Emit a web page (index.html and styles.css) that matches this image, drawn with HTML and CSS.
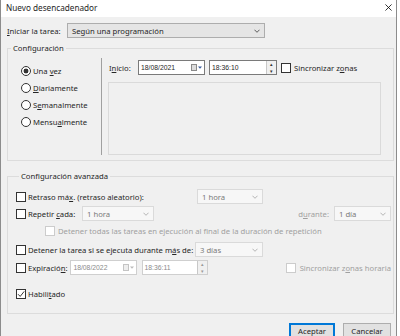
FILE: index.html
```html
<!DOCTYPE html>
<html lang="es">
<head>
    <meta charset="UTF-8">
    <title>Nuevo desencadenador</title>
    <link rel="stylesheet" href="styles.css">
</head>
<body>
<div class="window">
    <div class="titlebar">
        <span class="title">Nuevo desencadenador</span>
        <svg class="close" viewBox="0 0 8 8"><path d="M0.5 0.5L7.5 7.5M7.5 0.5L0.5 7.5" stroke="#000" stroke-width="0.9" fill="none"/></svg>
    </div>

    <div class="content">
        <div class="start-row">
            <span class="start-lbl"><u>I</u>niciar la tarea:</span>
            <div class="combo start-combo">
                <span>Según una programación</span>
                <svg class="chev" viewBox="0 0 7 4"><path d="M0.5 0.5L3.5 3.5L6.5 0.5" stroke="#444" fill="none"/></svg>
            </div>
        </div>

        <fieldset class="group group-config">
            <legend>Configuración</legend>
            <div class="config-body">
                <div class="radios">
                    <div class="radio-row"><span class="radio checked"></span><span>Una <u>v</u>ez</span></div>
                    <div class="radio-row"><span class="radio"></span><span><u>D</u>iariamente</span></div>
                    <div class="radio-row"><span class="radio"></span><span>S<u>e</u>manalmente</span></div>
                    <div class="radio-row"><span class="radio"></span><span>Mensu<u>a</u>lmente</span></div>
                </div>
                <div class="vsep"></div>
                <div class="schedule">
                    <div class="start-line">
                        <span class="inicio-lbl">I<u>n</u>icio:</span>
                        <div class="datebox">
                            <span>18/08/2021</span>
                            <svg class="cal" viewBox="0 0 11 7"><rect x="0.5" y="0.5" width="5" height="6" fill="#dcdcdc" stroke="#8a8a8a"/><path d="M7 2.5h4L9 4.8z" fill="#3a5a9a"/></svg>
                        </div>
                        <div class="timebox">
                            <span>18:36:10</span>
                            <span class="spin"><span>&#9652;</span><span>&#9662;</span></span>
                        </div>
                        <span class="chk sync-chk"></span>
                        <span>Sincronizar z<u>o</u>nas</span>
                    </div>
                    <div class="detail-box"></div>
                </div>
            </div>
        </fieldset>

        <fieldset class="group group-adv">
            <legend>Configuración avanzada</legend>
            <div class="adv-row r1">
                <span class="chk"></span>
                <span class="lbl lbl-retraso">Retraso má<u>x</u>. (retraso aleatorio):</span>
                <div class="combo off w66"><span>1 hora</span><svg class="chev" viewBox="0 0 7 4"><path d="M0.5 0.5L3.5 3.5L6.5 0.5" stroke="#aaa" fill="none"/></svg></div>
            </div>
            <div class="adv-row r2">
                <span class="chk"></span>
                <span class="lbl lbl-repetir">Repetir <u>c</u>ada:</span>
                <div class="combo off w72"><span>1 hora</span><svg class="chev" viewBox="0 0 7 4"><path d="M0.5 0.5L3.5 3.5L6.5 0.5" stroke="#aaa" fill="none"/></svg></div>
                <span class="durante dim">d<u>u</u>rante:</span>
                <div class="combo off w57"><span>1 día</span><svg class="chev" viewBox="0 0 7 4"><path d="M0.5 0.5L3.5 3.5L6.5 0.5" stroke="#aaa" fill="none"/></svg></div>
            </div>
            <div class="adv-row r3">
                <span class="chk off sub-chk"></span>
                <span class="dim">Detener todas las tareas en ejecución al final de la duración de repetición</span>
            </div>
            <div class="adv-row r4">
                <span class="chk"></span>
                <span class="lbl lbl-detener">Detener la tarea si se ejecuta durante m<u>á</u>s de:</span>
                <div class="combo off w68"><span>3 días</span><svg class="chev" viewBox="0 0 7 4"><path d="M0.5 0.5L3.5 3.5L6.5 0.5" stroke="#aaa" fill="none"/></svg></div>
            </div>
            <div class="adv-row r5">
                <span class="chk"></span>
                <span class="lbl lbl-exp">Expiració<u>n</u>:</span>
                <div class="datebox off">
                    <span>18/08/2022</span>
                    <svg class="cal" viewBox="0 0 11 7"><rect x="0.5" y="0.5" width="5" height="6" fill="#eee" stroke="#c4c4c4"/><path d="M7 2.5h4L9 4.8z" fill="#bbb"/></svg>
                </div>
                <div class="timebox off">
                    <span>18:36:11</span>
                    <span class="spin"><span>&#9652;</span><span>&#9662;</span></span>
                </div>
                <span class="chk off exp-sync"></span>
                <span class="dim">Sincronizar z<u>o</u>nas horaria</span>
            </div>
            <div class="adv-row r6">
                <span class="chk">
                    <svg viewBox="0 0 8 8"><path d="M1 4.2L3.2 6.4L7.2 1.4" stroke="#222" stroke-width="0.9" fill="none"/></svg>
                </span>
                <span class="lbl">Habili<u>t</u>ado</span>
            </div>
        </fieldset>

        <div class="buttons">
            <button class="btn btn-primary">Aceptar</button>
            <button class="btn btn-cancel">Cancelar</button>
        </div>
    </div>
</div>
</body>
</html>
```

FILE: styles.css
```css
* {
    box-sizing: border-box;
}
body {
    margin: 0;
    background: #fff;
    font-family: "Noto Sans", sans-serif;
    font-size: 7.7px;
    color: #262626;
}
u {
    text-decoration-thickness: 1px;
    text-underline-offset: 1px;
}
.window {
    width: 397px;
    height: 336px;
    border-left: 1px solid #8c8c8c;
    border-right: 1px solid #8c8c8c;
    background: #f0f0f0;
    overflow: hidden;
}
.titlebar {
    height: 17px;
    background: #fff;
    display: flex;
    align-items: center;
    justify-content: space-between;
    padding: 0 4px 2px 5px;
}
.title {
    font-size: 8.2px;
}
.close {
    width: 7px;
    height: 7px;
}
.content {
    padding: 0 2px 0 6px;
}

/* fila superior */
.start-row {
    display: flex;
    align-items: center;
    height: 15px;
    margin-top: 6px;
}
.start-lbl {
    width: 60px;
}
.combo {
    display: flex;
    align-items: center;
    justify-content: space-between;
    height: 15px;
    border: 1px solid #adadad;
    background: #e5e5e5;
    padding: 0 4px 0 4px;
    white-space: nowrap;
}
.combo .chev {
    width: 6px;
    height: 4px;
}
.combo.off {
    background: #f7f7f7;
    border-color: #dadada;
    color: #7a7a7a;
}
.start-combo {
    width: 198px;
}
.w57 { width: 57px; }
.w66 { width: 66px; }
.w68 { width: 68px; }
.w72 { width: 72px; }

/* grupos */
fieldset.group {
    margin: 0;
    padding: 0;
    border: 1px solid #dcdcdc;
    min-width: 0;
}
fieldset.group legend {
    padding: 0 2px;
    margin-left: 3px;
    line-height: 10px;
    height: 10px;
}
.group-config {
    margin-top: 5px !important;
    height: 118px;
}
.config-body {
    display: flex;
    margin-top: 5px;
    height: 97px;
}
.radios {
    width: 93px;
    padding-top: 4px;
    display: flex;
    flex-direction: column;
}
.radio-row {
    height: 17px;
    display: flex;
    align-items: center;
    gap: 2px;
    padding-left: 13px;
}
.radio {
    width: 10px;
    height: 10px;
    border: 1px solid #333;
    border-radius: 50%;
    background: #fff;
}
.radio.checked {
    background: radial-gradient(circle, #333 0, #333 2.2px, #fff 2.7px);
}
.vsep {
    width: 1px;
    background: #a0a0a0;
}
.schedule {
    padding: 2px 0 0 7px;
    display: flex;
    flex-direction: column;
}
.start-line {
    display: flex;
    align-items: center;
    height: 15px;
    white-space: nowrap;
}
.inicio-lbl {
    width: 29px;
}
.datebox,
.timebox {
    display: flex;
    align-items: center;
    justify-content: space-between;
    height: 15px;
    border: 1px solid #7a7a7a;
    background: #fff;
    padding: 0 1px 0 2px;
    font-family: "Liberation Sans", sans-serif;
    font-size: 6.8px;
}
.datebox {
    width: 67px;
}
.timebox {
    width: 68px;
    margin-left: 4px;
    padding-right: 0;
}
.cal {
    width: 11px;
    height: 7px;
    margin-right: 1px;
}
.spin {
    width: 10px;
    height: 13px;
    display: flex;
    flex-direction: column;
    border-left: 1px solid #c8c8c8;
    background: #f0f0f0;
    font-size: 5px;
    line-height: 6.5px;
    text-align: center;
    color: #333;
}
.datebox.off,
.timebox.off {
    border-color: #cfcfcf;
    color: #8a8a8a;
}
.timebox.off .spin {
    color: #999;
}
.chk {
    width: 10px;
    height: 10px;
    border: 1px solid #333;
    background: #fff;
    margin-right: 2px;
    flex: none;
}
.chk svg {
    width: 8px;
    height: 8px;
    display: block;
}
.chk.off {
    border-color: #cccccc;
}
.sync-chk {
    margin-left: 4px;
    margin-right: 3px;
}
.detail-box {
    margin-top: 7px;
    margin-left: -1px;
    width: 273px;
    height: 75px;
    border: 1px solid #dadada;
}

/* configuracion avanzada */
.group-adv {
    margin-top: 10px !important;
    height: 143px;
    padding: 0 2px 0 8px !important;
}
.adv-row {
    display: flex;
    align-items: center;
    height: 15px;
    white-space: nowrap;
}
.dim {
    color: #a0a0a0;
}
.r1 { margin-top: 8px; }
.r2 { margin-top: 2px; }
.r3 { margin-top: 3px; height: 14px; }
.r4 { margin-top: 4px; }
.r5 { margin-top: 3px; }
.r6 { margin-top: 11px; }
.lbl-retraso { width: 169px; }
.lbl-repetir { width: 54px; }
.lbl-detener { width: 167px; }
.lbl-exp { width: 43px; }
.durante {
    margin-left: auto;
    margin-right: 5px;
}
.sub-chk {
    margin-left: 29px;
    margin-right: 3px;
}
.r5 .timebox {
    width: 67px;
    margin-left: 5px;
}
.exp-sync {
    margin-left: 78px;
    margin-right: 4px;
}

/* botones */
.buttons {
    display: flex;
    justify-content: flex-end;
    gap: 8px;
    margin-top: 9px;
    padding-right: 3px;
}
.btn {
    height: 16px;
    padding: 0;
    border: 1px solid #adadad;
    background: #e1e1e1;
    font-family: "Noto Sans", sans-serif;
    font-size: 7.7px;
    color: #262626;
}
.btn-primary {
    width: 46px;
    border-color: #0078d7;
    box-shadow: inset 0 0 0 1px #0078d7;
}
.btn-cancel {
    width: 48px;
}
```
